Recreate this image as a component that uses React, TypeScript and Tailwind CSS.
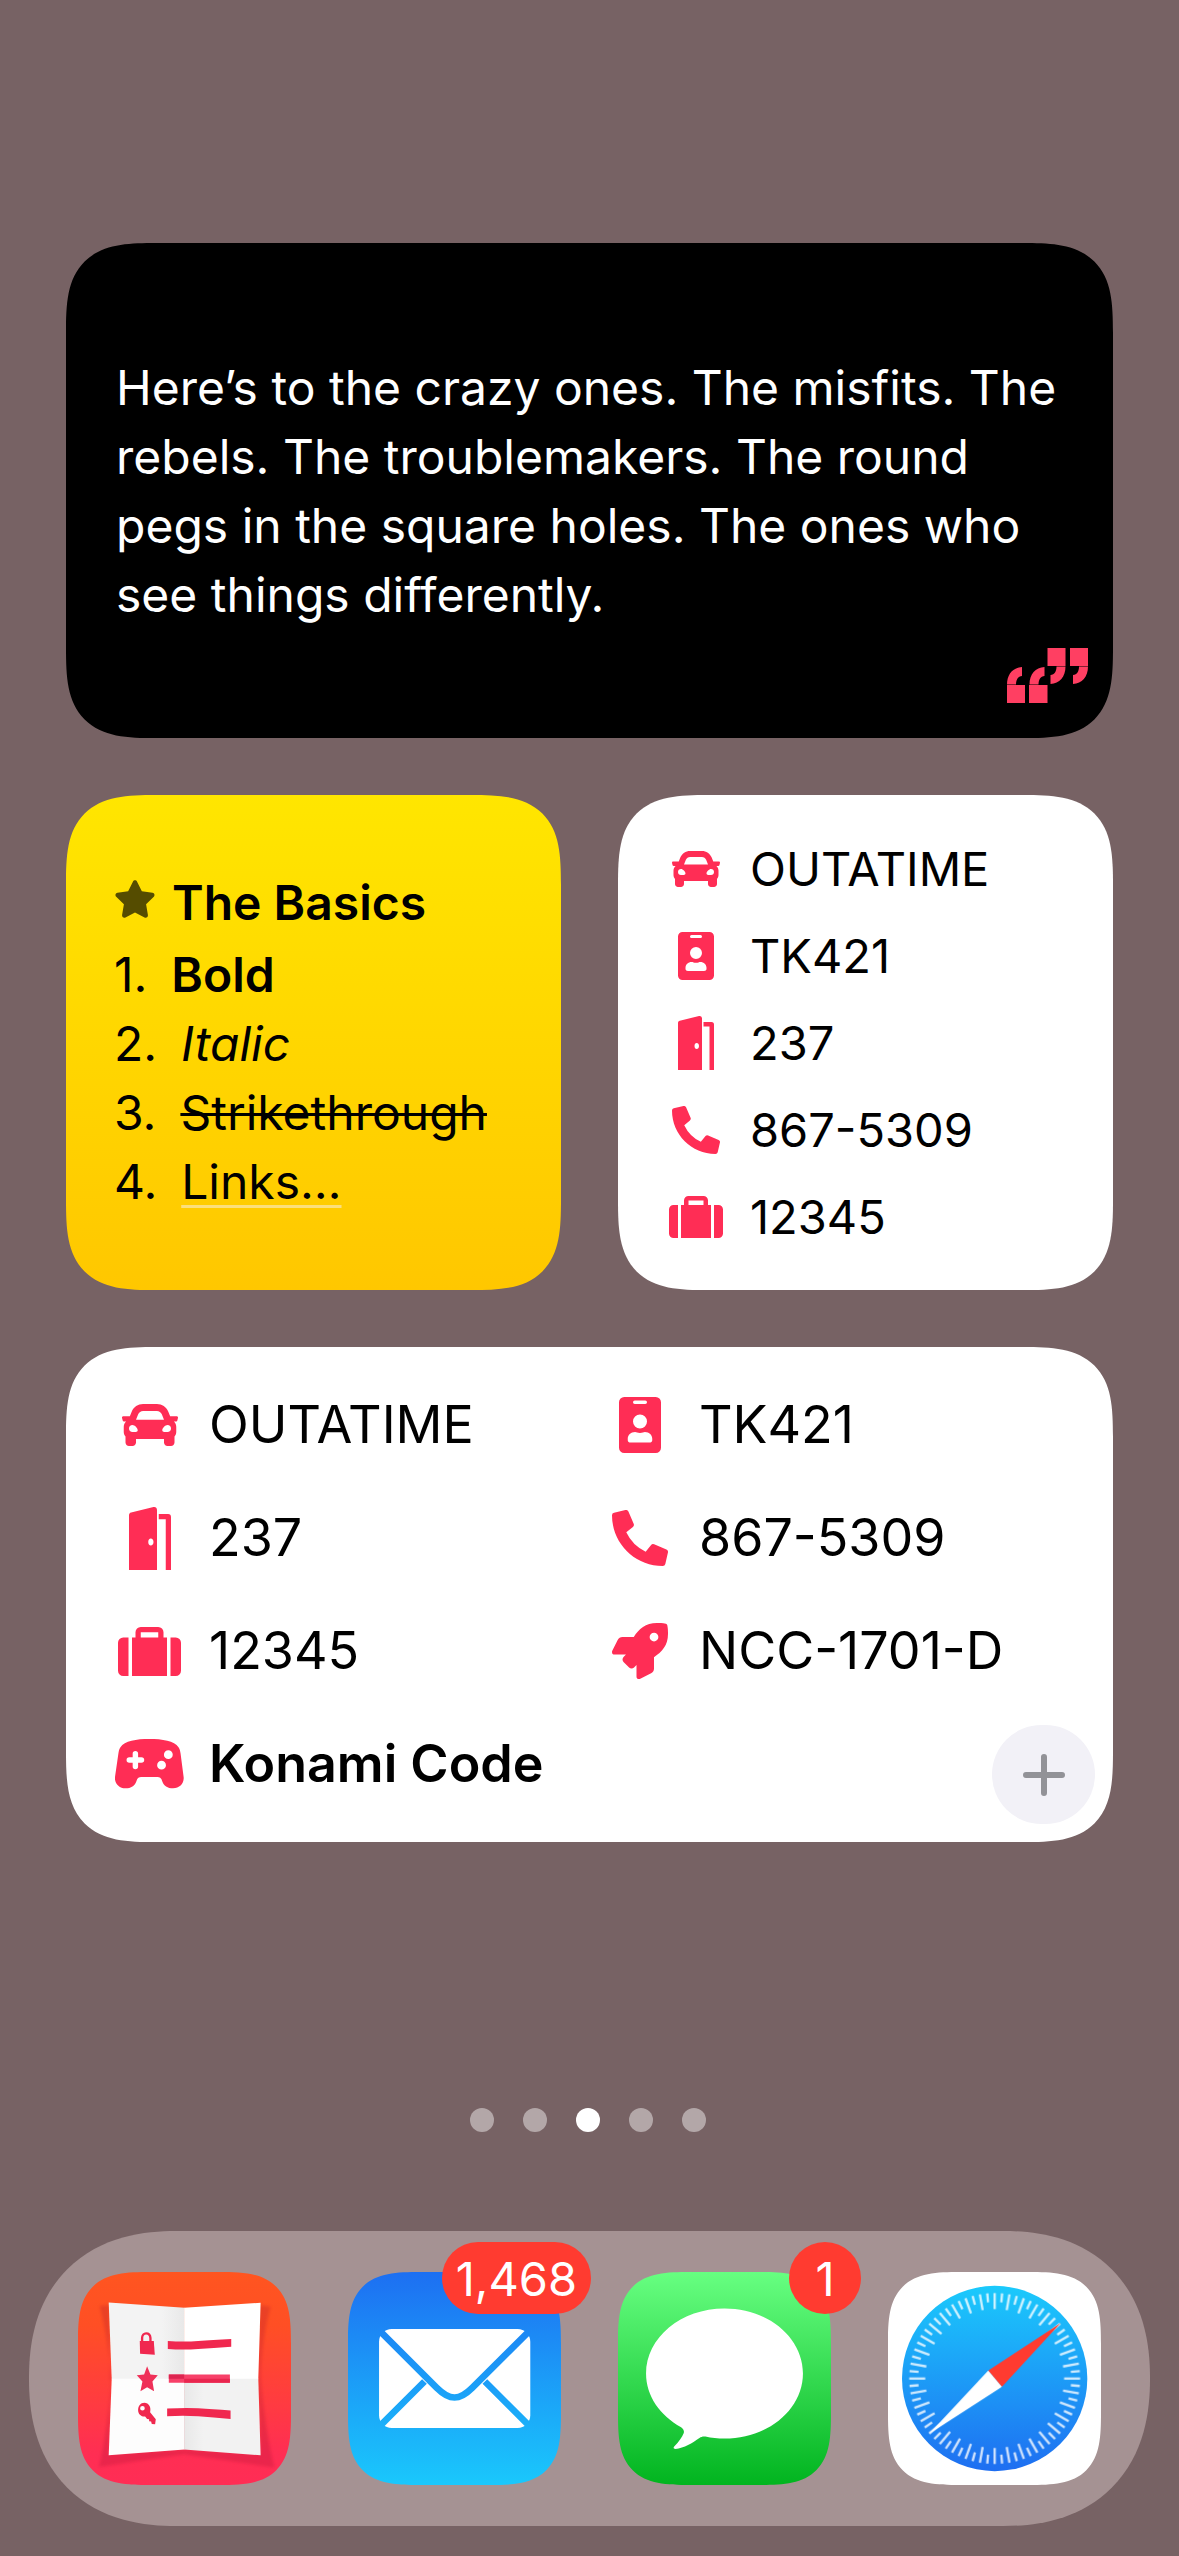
import type { ReactNode } from "react";
import { FaCar, FaPhoneAlt, FaRocket, FaStar } from "react-icons/fa";

const CARD =
  "rounded-[62px] supports-[corner-shape:squircle]:rounded-[90px] [corner-shape:superellipse(1.58)]";
const APP =
  "block size-full overflow-hidden rounded-[48px] supports-[corner-shape:squircle]:rounded-[72px] [corner-shape:superellipse(1.6)]";

function BadgeIcon() {
  return (
    <svg viewBox="0 0 36 48" className="h-full max-w-none shrink-0" fill="currentColor" aria-hidden="true">
      <path
        fillRule="evenodd"
        d="M4.500 0H31.500A4.500 4.500 0 0 1 36 4.500V43.500A4.500 4.500 0 0 1 31.500 48H4.500A4.500 4.500 0 0 1 0 43.500V4.500A4.500 4.500 0 0 1 4.500 0ZM13.500 3a1.500 1.500 0 0 0 0 3h9a1.500 1.500 0 0 0 0-3ZM18 15a6 6 0 1 0 0 12a6 6 0 0 0 0-12ZM13.800 30C10 30 7.500 32.600 7.500 35.800V37C7.500 38.200 8.600 39 9.900 39H26.100C27.400 39 28.500 38.200 28.500 37V35.800C28.500 32.600 26 30 22.200 30C21 30 20.200 30.750 18 30.750S15 30 13.800 30Z"
      />
    </svg>
  );
}

function DoorIcon() {
  return (
    <svg viewBox="0 0 36 54" className="h-[112.500%] max-w-none shrink-0" fill="currentColor" aria-hidden="true">
      <path
        fillRule="evenodd"
        d="M1.800 4.700L21 .1C22.700-.3 24 .9 24 2.500V54H0V7C0 5.800.7 5 1.800 4.700ZM18.700 27C17.400 27 16.500 28.300 16.500 30S17.400 33 18.700 33S21 31.700 21 30S20 27 18.700 27Z"
      />
      <path d="M25.500 6H33.500A2.500 2.500 0 0 1 36 8.500V54H31.500V10.500H25.500Z" />
    </svg>
  );
}

function SuitcaseIcon() {
  return (
    <svg viewBox="0 0 54 42" className="h-[87.500%] max-w-none shrink-0" fill="currentColor" aria-hidden="true">
      <path d="M9 9V42H4.500A4.500 4.500 0 0 1 0 37.500V13.500A4.500 4.500 0 0 1 4.500 9ZM45 9H49.500A4.500 4.500 0 0 1 54 13.500V37.500A4.500 4.500 0 0 1 49.500 42H45Z" />
      <path
        fillRule="evenodd"
        d="M12 9H15V4.500A4.500 4.500 0 0 1 19.500 0H34.500A4.500 4.500 0 0 1 39 4.500V9H42V42H12ZM19.500 9H34.500V4.500H19.500Z"
      />
    </svg>
  );
}

function GamepadIcon() {
  return (
    <svg viewBox="187 1213 202 145" className="h-[88%] max-w-none shrink-0" fill="currentColor" aria-hidden="true">
      <path
        fillRule="evenodd"
        d="M288 1213C326 1213 362 1218 374 1237C378 1243 379 1249 380 1256L389 1325C391 1344 377 1358 358 1358C342 1358 330 1350 326 1337C324 1330 320 1325 312 1325H264C256 1325 252 1330 250 1337C246 1350 234 1358 218 1358C199 1358 185 1344 187 1325L197 1256C198 1249 199 1243 203 1237C215 1218 250 1213 288 1213ZM247 1248C242 1248 239 1251 239 1256V1267H229C224 1267 221 1270 221 1275S224 1283 229 1283H239V1294C239 1299 242 1302 247 1302S255 1299 255 1294V1283H265C270 1283 273 1280 273 1275S270 1267 265 1267H255V1256C255 1251 252 1248 247 1248ZM344 1246a13 13 0 1 0 0 26a13 13 0 0 0 0-26ZM324 1277a13 13 0 1 0 0 26a13 13 0 0 0 0-26Z"
      />
    </svg>
  );
}

function QuoteIcon() {
  return (
    <svg viewBox="0 0 81 55" className="h-[55px] w-[81px] text-[#ff3f62]" fill="currentColor" role="img" aria-label="Quote">
      <rect x="0" y="37" width="18" height="18" />
      <rect x="22" y="37" width="18.500" height="18" />
      <path d="M0 36.500C0 26 6 19.500 15 19V28C11 28.500 9 31.500 9 36.500ZM22.500 36.500C22.500 26 28.500 19.500 37.500 19V28C33.500 28.500 31.500 31.500 31.500 36.500Z" />
      <rect x="40.500" y="0" width="18" height="18" />
      <rect x="63" y="0" width="18" height="18" />
      <path d="M58.500 18.500C58.500 29 52.500 35.500 43.500 36V27C47.500 26.500 49.500 23.500 49.500 18.500ZM81 18.500C81 29 75 35.500 66 36V27C70 26.500 72 23.500 72 18.500Z" />
    </svg>
  );
}

type Entry = { label: string; icon: ReactNode; strong?: boolean };

const CAR: Entry = { label: "OUTATIME", icon: <FaCar className="size-full" /> };
const ID: Entry = { label: "TK421", icon: <BadgeIcon /> };
const DOOR: Entry = { label: "237", icon: <DoorIcon /> };
const PHONE: Entry = { label: "867-5309", icon: <FaPhoneAlt className="size-full" /> };
const CASE: Entry = { label: "12345", icon: <SuitcaseIcon /> };
const ROCKET: Entry = { label: "NCC-1701-D", icon: <FaRocket className="size-full" /> };
const PAD: Entry = { label: "Konami Code", icon: <GamepadIcon />, strong: true };

function CrumpledListIcon() {
  return (
    <svg viewBox="175 186 638 638" className="size-full" aria-hidden="true">
      <defs>
        <linearGradient id="listBg" x1="0" y1="0" x2="0" y2="1">
          <stop offset="0" stopColor="#ff5520" />
          <stop offset="0.250" stopColor="#ff4f24" />
          <stop offset="0.850" stopColor="#ff2e53" />
          <stop offset="1" stopColor="#ff2d55" />
        </linearGradient>
        <linearGradient id="foldTop" x1="0" y1="0" x2="1" y2="0">
          <stop offset="0.700" stopColor="#f3f3f3" />
          <stop offset="1" stopColor="#e8e8e8" />
        </linearGradient>
        <linearGradient id="foldBottom" x1="0" y1="0" x2="1" y2="0">
          <stop offset="0" stopColor="#e8e8e8" />
          <stop offset="0.250" stopColor="#f2f2f2" />
        </linearGradient>
        <filter id="soft" x="-20%" y="-20%" width="140%" height="140%">
          <feGaussianBlur stdDeviation="5" />
        </filter>
      </defs>
      <rect x="175" y="186" width="638" height="638" fill="url(#listBg)" />
      <path
        d="M240 288L270 285V510L276 506L267 730L493 718L722 730L715 506L718 285L752 290C735 350 725 420 722 500C730 600 745 700 764 772L493 732L238 770C255 700 270 600 274 505C270 420 255 350 240 288Z"
        fill="#a01030"
        opacity="0.220"
        filter="url(#soft)"
      />
      <path d="M267 277L494 293V507H276Z" fill="url(#foldTop)" />
      <path d="M493 293L722 278L715 507H493Z" fill="#fff" />
      <path d="M276 506H494V718L267 735Z" fill="#fdfdfd" />
      <path d="M493 506H715L722 735L493 718Z" fill="url(#foldBottom)" />
      <path d="M444 393Q493 396 535 393T634 387V410Q580 414 535 417T444 417Z" fill="#f0284f" />
      <path d="M447 493H630V518H447Z" fill="#f74169" />
      <path d="M447 493H493V506H447Z" fill="#dd2550" />
      <path d="M493 506H630V518H493Z" fill="#e9264f" />
      <path d="M442 595Q493 592 535 594T632 601V626Q580 621 535 618T442 618Z" fill="#f0284f" />
      <path d="M360 393H402L405 434L361 431Z" fill="#f0284f" />
      <path d="M367 396V384C367 365 391 365 392 384V396" fill="none" stroke="#f0284f" strokeWidth="7" />
      <path d="M382 468L392 493L414 495L398 514L403 543L382 531L362 543L368 514L351 495L373 493Z" fill="#ef3058" />
      <path
        fillRule="evenodd"
        d="M374 578C362 578 355 588 355 600C355 612 365 620 376 619L382 626L388 627V633L394 634L396 641L406 642L408 627L391 606C395 592 387 578 374 578ZM368 587A7 7 0 1 1 368 601A7 7 0 1 1 368 587Z"
        fill="#f0284f"
      />
    </svg>
  );
}

function MailIcon() {
  return (
    <svg viewBox="84 186 638 638" className="size-full" aria-hidden="true">
      <defs>
        <linearGradient id="mailBg" gradientUnits="userSpaceOnUse" x1="0" y1="186" x2="0" y2="824">
          <stop offset="0" stopColor="#1d6ff2" />
          <stop offset="1" stopColor="#1ac8fc" />
        </linearGradient>
      </defs>
      <rect x="84" y="186" width="638" height="638" fill="url(#mailBg)" />
      <rect x="177" y="357" width="453" height="296" rx="38" fill="#fff" />
      <g fill="none" stroke="url(#mailBg)" strokeWidth="20">
        <path d="M165 348L350 533C368 551 385 562 403 562S438 551 456 533L642 348" />
        <path d="M165 662L313 514M642 662L494 514" />
      </g>
    </svg>
  );
}

function MessagesIcon() {
  return (
    <svg viewBox="84 186 638 638" className="size-full" aria-hidden="true">
      <defs>
        <linearGradient id="msgBg" x1="0" y1="0" x2="0" y2="1">
          <stop offset="0" stopColor="#67ff81" />
          <stop offset="1" stopColor="#01b41f" />
        </linearGradient>
      </defs>
      <rect x="84" y="186" width="638" height="638" fill="url(#msgBg)" />
      <path
        d="M403 295C533 295 638 382 638 490S533 685 403 685C383 685 364 683 346 679C338 678 333 680 328 683C307 698 282 713 256 716C250 716 249 712 253 708C266 694 276 681 281 668C283 661 279 655 273 651C210 616 168 557 168 490C168 382 273 295 403 295Z"
        fill="#fff"
      />
    </svg>
  );
}

function SafariIcon() {
  return (
    <svg viewBox="84 186 638 638" className="size-full" aria-hidden="true">
      <defs>
        <linearGradient id="safariBg" x1="0" y1="0" x2="0" y2="1">
          <stop offset="0" stopColor="#1bcafc" />
          <stop offset="1" stopColor="#1e6ef1" />
        </linearGradient>
      </defs>
      <rect x="84" y="186" width="638" height="638" fill="#fff" />
      <circle cx="403.500" cy="505" r="277.500" fill="url(#safariBg)" />
      <g stroke="#fff" strokeWidth="7" opacity="0.800">
        {Array.from({ length: 72 }, (_, i) => (
          <line
            key={i}
            x1="403.500"
            x2="403.500"
            y1="249"
            y2={i % 2 === 0 ? 297 : 276}
            transform={`rotate(${i * 5} 403.500 505)`}
          />
        ))}
      </g>
      <path d="M601 339L425 530L384 481Z" fill="#ff3b30" />
      <path d="M207 671L384 481L425 530Z" fill="#fff" />
    </svg>
  );
}

const APPS: { name: string; icon: ReactNode; badge?: string }[] = [
  { name: "Lists", icon: <CrumpledListIcon /> },
  { name: "Mail", icon: <MailIcon />, badge: "1,468" },
  { name: "Messages", icon: <MessagesIcon />, badge: "1" },
  { name: "Safari", icon: <SafariIcon /> },
];

const BASICS: { id: string; body: ReactNode }[] = [
  { id: "1.", body: <strong className="ml-4 font-semibold">Bold</strong> },
  { id: "2.", body: <em className="ml-4">Italic</em> },
  { id: "3.", body: <s className="ml-4 decoration-3">Strikethrough</s> },
  {
    id: "4.",
    body: (
      <a href="#links" className="ml-4 underline decoration-[#fbdf7c] decoration-3 underline-offset-6">
        Links…
      </a>
    ),
  },
];

export default function App() {
  return (
    <main className="flex min-h-screen flex-col bg-[#776264] pt-[243px] font-['Inter',sans-serif] text-black">
      <div className="flex flex-col gap-[57px] px-[66px]">
        <section className={`relative flex min-h-[495px] items-center bg-black px-[50px] ${CARD}`}>
          <p className="text-[48px] leading-[69px] text-white">
            Here’s to the crazy ones. The misfits. The
            <br />
            rebels. The troublemakers. The round
            <br />
            pegs in the square holes. The ones who
            <br />
            see things differently.
          </p>
          <div className="absolute right-[25px] bottom-[35px]">
            <QuoteIcon />
          </div>
        </section>

        <div className="grid grid-cols-2 gap-[57px]">
          <section
            className={`flex min-h-[495px] flex-col justify-center bg-linear-to-b from-[#ffe600] to-[#ffc700] px-12 pb-1 text-[48px] leading-[69px] ${CARD}`}
          >
            <h2 className="flex h-[75px] items-center gap-4 font-semibold whitespace-nowrap">
              <span className="pb-2">
                <FaStar className="size-[42px] shrink-0 text-[#554c00]" aria-hidden="true" />
              </span>
              The Basics
            </h2>
            <ol>
              {BASICS.map((item) => (
                <li key={item.id} className="flex gap-2">
                  <span>{item.id}</span>
                  {item.body}
                </li>
              ))}
            </ol>
          </section>

          <section className={`flex min-h-[495px] flex-col justify-center bg-white px-[50px] ${CARD}`}>
            <ul>
              {[CAR, ID, DOOR, PHONE, CASE].map((e) => (
                <li key={e.label} className="flex h-[87px] items-center gap-[26px]">
                  <span className="flex w-14 shrink-0 justify-center text-[#ff2d55]">
                    <span className="flex size-12 items-center justify-center">{e.icon}</span>
                  </span>
                  <span className="text-[47px] leading-none whitespace-nowrap">{e.label}</span>
                </li>
              ))}
            </ul>
          </section>
        </div>

        <section className={`relative flex min-h-[495px] flex-col justify-center bg-white px-[50px] ${CARD}`}>
          <ul className="grid grid-cols-2 gap-x-[33px]">
            {[CAR, ID, DOOR, PHONE, CASE, ROCKET, PAD].map((e) => (
              <li key={e.label} className="flex h-[113px] items-center gap-[26px]">
                <span className="flex w-[67px] shrink-0 justify-center text-[#ff2d55]">
                  <span className="flex size-14 items-center justify-center">{e.icon}</span>
                </span>
                <span
                  className={`text-[52px] leading-none whitespace-nowrap ${e.strong ? "font-semibold" : "font-normal"}`}
                >
                  {e.label}
                </span>
              </li>
            ))}
          </ul>
          <button
            type="button"
            aria-label="Add"
            className="absolute right-[18px] bottom-[18px] flex h-[99px] w-[103px] items-center justify-center rounded-full bg-[#f2f1f7]"
          >
            <svg viewBox="0 0 42 42" className="size-[42px]" stroke="#929297" strokeWidth="6" strokeLinecap="round" aria-hidden="true">
              <path d="M3 21H39M21 3V39" />
            </svg>
          </button>
        </section>
      </div>

      <nav aria-label="Pages" className="mt-auto flex justify-center gap-[29px] pr-1">
        {[1, 2, 3, 4, 5].map((n) => (
          <button
            key={n}
            type="button"
            aria-label={`Page ${n}`}
            className={`size-6 rounded-full ${n === 3 ? "bg-white" : "bg-[#b3a7a8]"}`}
          />
        ))}
      </nav>

      <footer className="mx-[29px] mt-[99px] mb-[30px] grid grid-cols-4 gap-[57px] rounded-[128px] bg-[#a59293] px-[49px] py-[41px] [corner-shape:superellipse(1.2)] supports-[corner-shape:squircle]:rounded-[147px]">
        {APPS.map((app) => (
          <button key={app.name} type="button" aria-label={app.name} className="relative aspect-square">
            <span className={APP}>{app.icon}</span>
            {app.badge && (
              <span className="absolute -top-[30px] -right-[30px] flex h-[72px] min-w-[72px] items-center justify-center rounded-full bg-[#ff3b30] px-3.5 text-[47px] leading-none text-white">
                {app.badge}
              </span>
            )}
          </button>
        ))}
      </footer>
    </main>
  );
}
